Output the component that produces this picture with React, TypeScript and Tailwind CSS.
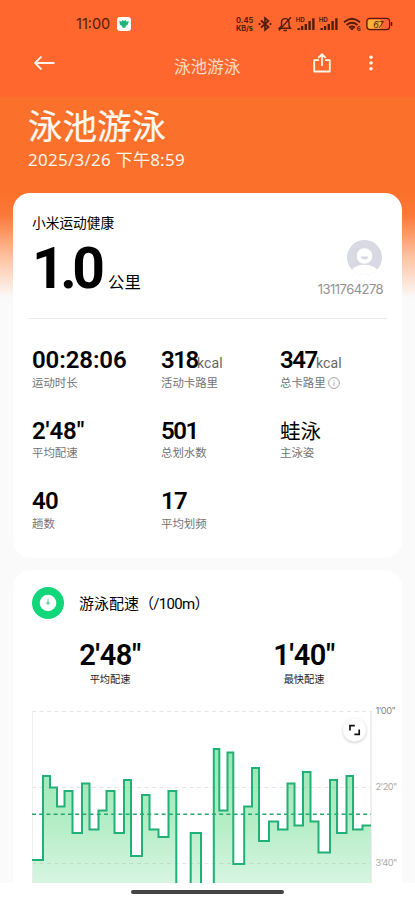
import React from 'react';

const LATIN = "font-['Inter','Noto_Sans_CJK_SC',sans-serif]";

const PACE: [number, number][][] = [
  [[0, 149], [11, 149], [11, 65], [18, 65], [18, 76.5], [25, 76.5], [25, 95.5], [32.5, 95.5], [32.5, 80], [40.5, 80], [40.5, 122], [50, 122], [50, 72.5], [57.5, 72.5], [57.5, 118.5], [66.5, 118.5], [66.5, 99.5], [74.5, 99.5], [74.5, 80], [82.5, 80], [82.5, 122], [92, 122], [92, 69], [99, 69], [99, 145], [110, 145], [110, 84], [117.5, 84], [117.5, 118.5], [126.5, 118.5], [126.5, 126], [136.5, 126], [136.5, 80], [144.3, 80], [144.3, 176]],
  [[158.7, 176], [158.7, 122], [169, 122], [169, 176]],
  [[181.8, 176], [181.8, 38], [187.3, 38], [187.3, 99.5], [195.5, 99.5], [195.5, 41.5], [201.3, 41.5], [201.3, 153], [212.2, 153], [212.2, 95.5], [220, 95.5], [220, 57], [227, 57], [227, 130], [237, 130], [237, 110.5], [246, 110.5], [246, 118.5], [255.5, 118.5], [255.5, 72.5], [262.5, 72.5], [262.5, 114.5], [271, 114.5], [271, 61], [278.5, 61], [278.5, 110.5], [286.5, 110.5], [286.5, 141.5], [298, 141.5], [298, 69], [305, 69], [305, 122], [314.5, 122], [314.5, 65], [321, 65], [321, 118.5], [330.5, 118.5], [330.5, 114.5], [339, 114.5]],
];

const points = (run: [number, number][]) => run.map((p) => p.join(',')).join(' ');

function Signal() {
  return (
    <svg width="20" height="14" viewBox="0 0 20 14" className="shrink-0 text-[#541d0b]">
      <text x="-.3" y="5" fontSize="6.2" fontWeight="700" fontFamily="Inter, sans-serif" fill="currentColor">HD</text>
      <path d="M2.7 11v2M6.100 9v4M9.800 7v6M13.600 4v9M17.400 1.200v11.800" stroke="currentColor" strokeWidth="2.400" />
    </svg>
  );
}

function StatusBar() {
  return (
    <div className="flex h-12 items-center pl-[76px] pr-[22px] text-[#541d0b]">
      <span className="w-[35px] whitespace-nowrap text-[14.5px] leading-5">11:00</span>
      <svg width="14" height="14" viewBox="0 0 14 14" className="ml-[6px] shrink-0">
        <rect width="14" height="14" rx="3" fill="#fff" />
        <path d="M2.200 4 4.600 4.600 5.600 3 7 4 8.800 3 9.600 4.700l2.200-.7-.9 3.600-2 1.200-.5 1.900H5.600L5 8.900 3 7.700z" fill="#20b477" />
      </svg>
      <span className="ml-auto flex w-[19px] flex-col pt-px text-[7.400px] font-bold leading-[7.500px] tracking-[.1px]">
        <span>0.45</span>
        <span className="tracking-[-0.1px]">KB/s</span>
      </span>
      <svg width="14" height="16" viewBox="0 0 14 16" className="ml-[3px] shrink-0" fill="none" stroke="currentColor" strokeWidth="1.700">
        <path d="M3 4.500 10.500 11 7 14V2l3.500 3L3 11.500" />
        <path d="M.6 8h1.800M11.600 8h1.800" strokeWidth="2" />
      </svg>
      <svg width="14" height="16" viewBox="0 0 14 16" className="ml-[6px] shrink-0" fill="none" stroke="currentColor" strokeWidth="1.400">
        <path d="M1.200 12.300h11.300L11 10V6.500C11 4 9.300 2.600 7.200 2.600S3.500 4 3.500 6.500V10z" />
        <path d="M.8 14.500 13 1.200M5.500 14.500h3.400" />
      </svg>
      <span className="ml-[4px] flex gap-[3px]"><Signal /><Signal /></span>
      <svg width="18" height="14" viewBox="0 0 18 14" className="ml-[4px] shrink-0" fill="none" stroke="currentColor" strokeWidth="1.800">
        <path d="M1 5.200q8-6.800 16 0M3.500 8q5.500-4.500 11 0M6 10.600q3-2.200 6 0" />
        <path d="M7.400 11.200h3.200L9 13z" fill="currentColor" strokeWidth="1" />
        <text x="13.800" y="13.800" fontSize="6" fontWeight="700" fontFamily="Inter, sans-serif" fill="currentColor" stroke="none">6</text>
      </svg>
      <svg width="27" height="14" viewBox="0 0 27 14" className="ml-[5px] shrink-0">
        <rect x="2" y="2.800" width="13" height="8.600" rx="1.500" fill="#f9b13e" />
        <rect x=".8" y="1.400" width="22.800" height="11.200" rx="3" fill="none" stroke="currentColor" strokeWidth="1.200" />
        <path d="M25.500 5v4" stroke="currentColor" strokeWidth="1.500" />
        <text x="7.200" y="10.500" fontSize="9" fontStyle="italic" letterSpacing="-.5" fontFamily="Inter, sans-serif" fill="currentColor">67</text>
      </svg>
    </div>
  );
}

function NavBar() {
  return (
    <div className="flex h-[50px] items-start px-[34px] text-white">
      <svg width="21" height="16" viewBox="0 0 21 16" className="mt-[7px]" fill="none" stroke="#fff3e8" strokeWidth="1.800">
        <path d="M20.500 8H1.200M7.500 1.500 1 8l6.500 6.500" />
      </svg>
      <h2 className="ml-[119px] mt-[7px] w-[61px] whitespace-nowrap text-[16.600px] font-normal leading-6 text-[#ffdbc4]">泳池游泳</h2>
      <svg width="18" height="20" viewBox="0 0 18 20" className="ml-[78px] mt-[5px] shrink-0" fill="none" stroke="#fff5e8" strokeWidth="1.800" strokeLinejoin="round">
        <path d="M6 7.200H1.200v11.300h15.600V7.200H12M9 13V1.200M5.300 4.800 9 1.200l3.700 3.600" />
      </svg>
      <svg width="4" height="18" viewBox="0 0 4 18" className="ml-[38px] mt-[7px] shrink-0" fill="#fff5e8">
        <circle cx="2" cy="2.300" r="1.800" /><circle cx="2" cy="8" r="1.800" /><circle cx="2" cy="13.700" r="1.800" />
      </svg>
    </div>
  );
}

function Stat({ value, unit, label, info, cjk }: { value: string; unit?: string; label: string; info?: boolean; cjk?: boolean }) {
  return (
    <div className="h-[70.700px] whitespace-nowrap">
      <div className="flex h-[28px] items-baseline text-black">
        <span className={cjk ? 'text-[20.500px] font-normal leading-[30px]' : `font-['Roboto',sans-serif] text-[24px] font-semibold leading-[29px] ${value.length > 3 ? 'tracking-[-0.1px]' : value.length === 3 ? 'tracking-[-1.4px]' : 'tracking-[-0.7px]'} ${unit ? 'w-[36px]' : ''}`}>{value}</span>
        {unit && <span className="font-['Roboto',sans-serif] text-[14px] leading-7 tracking-[0.1px] text-[#666]">{unit}</span>}
      </div>
      <div className="flex h-4 items-center pt-px text-[11.400px] leading-4 text-[#737373]">
        {label}
        {info && (
          <svg width="12" height="12" viewBox="0 0 12 12" className="ml-[2px]" fill="none" stroke="#999" strokeWidth=".9">
            <circle cx="6" cy="6" r="5.400" /><path d="M6 5.200v3.600M6 3v1.100" />
          </svg>
        )}
      </div>
    </div>
  );
}

function Summary() {
  return (
    <section className="mx-[13px] h-[365px] rounded-[17px] bg-white pl-[19px] pr-[15px] pt-5">
      <div className="flex h-[105px] justify-between">
        <div>
          <p className="h-5 text-[13.700px] leading-5 text-black">小米运动健康</p>
          <div className="mt-[5px] flex h-[60px] items-baseline whitespace-nowrap text-black">
            <span className="w-[76px] font-['Roboto',sans-serif] text-[57px] font-bold leading-[62px] tracking-[-4.500px]">1.0</span>
            <span className="text-[16.400px] leading-6">公里</span>
          </div>
        </div>
        <div className="mr-[4px] flex flex-col items-end pt-[27px]">
          <svg width="35" height="35" viewBox="0 0 35 35" className="mr-px">
            <defs><clipPath id="avatar"><circle cx="17.500" cy="17.500" r="17.500" /></clipPath></defs>
            <g clipPath="url(#avatar)">
              <rect width="35" height="35" fill="#d9d9e3" />
              <ellipse cx="17.500" cy="34" rx="14" ry="9.500" fill="#fff" />
              <circle cx="17.500" cy="16" r="8.300" fill="#fff" stroke="#d9d9e3" strokeWidth="1" />
              <path d="M13.500 16.500h8c-.7 4-7.300 4-8 0z" fill="#d9d9e3" />
            </g>
          </svg>
          <span className="mt-[4px] text-[13px] leading-5 tracking-[-0.550px] text-[#929292]">1311764278</span>
        </div>
      </div>
      <div className="-ml-[4px] h-px bg-[#ebebeb]" />
      <div className="grid grid-cols-[129px_119px_1fr] pt-[27px]">
        <Stat value="00:28:06" label="运动时长" />
        <Stat value="318" unit="kcal" label="活动卡路里" />
        <Stat value="347" unit="kcal" label="总卡路里" info />
        <Stat value={'2\'48"'} label="平均配速" />
        <Stat value="501" label="总划水数" />
        <Stat value="蛙泳" label="主泳姿" cjk />
        <Stat value="40" label="趟数" />
        <Stat value="17" label="平均划频" />
      </div>
    </section>
  );
}

function PaceChart() {
  return (
    <svg width="370" height="180" viewBox="0 0 370 180" className="block">
      <defs>
        <linearGradient id="pace" x1="0" y1="40" x2="0" y2="180" gradientUnits="userSpaceOnUse">
          <stop offset="0" stopColor="#98e8b3" /><stop offset=".45" stopColor="#afecc2" /><stop offset="1" stopColor="#dcf6e5" />
        </linearGradient>
        <filter id="lift" x="-50%" y="-50%" width="200%" height="200%">
          <feDropShadow dx="0" dy="1" stdDeviation="1.500" floodOpacity=".25" />
        </filter>
      </defs>
      <g transform="translate(0 7)">
        {PACE.map((run, i) => (
          <polygon key={i} points={`${run[0][0]},176 ${points(run)} ${run[run.length - 1][0]},176`} fill="url(#pace)" />
        ))}
        <path d="M0 .5h339M0 76.500h339M0 152.500h339" stroke="#8f9f96" strokeOpacity=".25" strokeDasharray="4 3.500" />
        <path d="M.3 0v176" stroke="#ededed" />
        <path d="M339 0v176" stroke="#dedede" />
        <path d="M0 103.300h339" stroke="#2aa572" strokeWidth="1.400" strokeDasharray="4 3.200" />
        {PACE.map((run, i) => (
          <polyline key={i} points={points(run)} fill="none" stroke="#20b078" strokeWidth="2" />
        ))}
        <g fontSize="9.300" fontFamily="Inter, sans-serif" letterSpacing="-.6">
          <text x="343.500" y="3" fill="#888">1'00"</text>
          <text x="343.500" y="79" fill="#aaa">2'20"</text>
          <text x="343.500" y="155" fill="#aaa">3'40"</text>
        </g>
        <circle cx="322.500" cy="19" r="11.300" fill="#fff" filter="url(#lift)" />
        <path d="M318 19.500v-4.800h4.800M327.200 18.500v4.800h-4.800" stroke="#111" strokeWidth="1.700" fill="none" />
      </g>
    </svg>
  );
}

function Pace() {
  return (
    <section className="mx-[13px] mt-3 h-[313px] overflow-hidden rounded-t-[17px] bg-white pl-[19px]">
      <div className="flex items-center pt-[17px]">
        <svg width="32" height="32" viewBox="0 0 32 32">
          <circle cx="16" cy="16" r="16" fill="#12d67a" />
          <circle cx="16" cy="16" r="8.300" fill="#fff" />
          <path d="M16 11.500v3.200" stroke="#9ce3bf" strokeWidth="1.300" />
          <circle cx="16" cy="16" r="1.700" fill="#63d69c" />
        </svg>
        <h3 className="ml-[15px] mt-px whitespace-nowrap font-['Roboto','Noto_Sans_CJK_SC',sans-serif] text-[15px] font-normal leading-6 text-black">游泳配速<span className="tracking-[-0.700px]">（/100m）</span></h3>
      </div>
      <div className="flex h-[85px] pt-[17px] text-center">
        {[['2\'48"', '平均配速', 'w-[156px]'], ['1\'40"', '最快配速', 'ml-[38px] w-[156px]']].map(([value, label, box]) => (
          <div key={label} className={box}>
            <p className="h-9 font-['Roboto',sans-serif] text-[29px] font-semibold leading-[38px] tracking-[-0.400px] text-black">{value}</p>
            <p className="text-[10.200px] leading-[14px] text-[#222]">{label}</p>
          </div>
        ))}
      </div>
      <PaceChart />
    </section>
  );
}

export default function App() {
  return (
    <main className={`${LATIN} h-[900px] w-[415px] overflow-hidden bg-[linear-gradient(to_bottom,#ff672f_0,#ff672f_96px,#fb702b_98px,#fb702b_195px,#fb7839_215px,#ffc7a7_260px,#fafafa_298px)]`}>
      <StatusBar />
      <NavBar />
      <header className="h-[95px] whitespace-nowrap pl-7 text-[#fff6e9]">
        <h1 className="pt-[7px] text-[34.500px] font-normal leading-[44px] text-[#fffaf0] [-webkit-text-stroke:0.2px]">泳池游泳</h1>
        <p className="-mt-px font-['Noto_Sans','Noto_Sans_CJK_SC',sans-serif] text-[17px] leading-6 tracking-[0.250px]">2025/3/26 下午8:59</p>
      </header>
      <Summary />
      <Pace />
      <footer className="flex h-[17px] justify-center bg-white pt-[6.500px]">
        <div className="h-[4px] w-[153px] rounded-full bg-[#444]" />
      </footer>
    </main>
  );
}
